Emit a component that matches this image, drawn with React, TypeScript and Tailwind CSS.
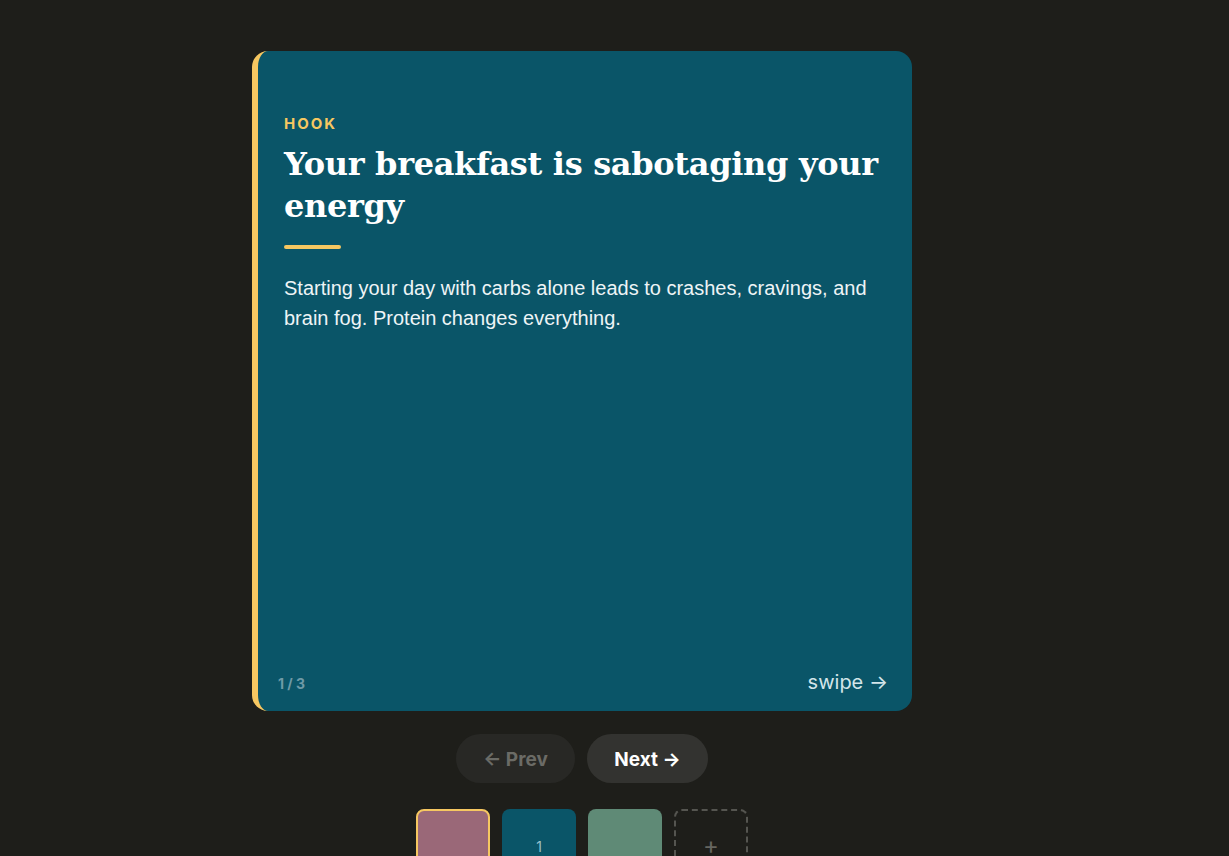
import React from "react";

export default function App() {
  return (
    <div className="w-full bg-[#1e1e1a] flex justify-center pr-[65px] pt-[51px] overflow-hidden" style={{ height: 856 }}>
      <div className="flex flex-col items-center">
        <div className="relative shrink-0 w-[660px] h-[660px] rounded-[16px] bg-[#0a5568] border-l-[6px] border-[#f6c761] pl-[26px] pr-[24px] pt-[64px]">
          <div className="font-['Inter',sans-serif] font-bold text-[15px] leading-[18px] tracking-[0.13em] text-[#f6c761]">HOOK</div>
          <h1 className="mt-[10px] font-['DejaVu_Serif',serif] font-bold text-[32px] leading-[42px] tracking-[-0.01em] text-white">
            Your breakfast is sabotaging your energy
          </h1>
          <div className="mt-[18px] w-[57px] h-[4px] rounded-full bg-[#f6c761]" />
          <p className="mt-[24px] font-['Liberation_Sans',sans-serif] text-[20px] leading-[30px] text-[#eef4f6]">
            Starting your day with carbs alone leads to crashes, cravings, and brain fog. Protein changes everything.
          </p>
          <div className="absolute left-[20px] bottom-[17px] font-['Inter',sans-serif] font-bold text-[14px] text-[#6f9aa7]">1 / 3</div>
          <div className="absolute right-[24px] bottom-[14px] font-['Inter',sans-serif] text-[20px] text-[#d3e5ea]">swipe →</div>
        </div>
        <div className="mt-[23px] flex gap-[12px] shrink-0">
          <button className="w-[119px] h-[49px] rounded-full bg-[#282825] pt-[3px] font-['Inter',sans-serif] font-bold text-[19px] text-[#6b6b66]">← Prev</button>
          <button className="w-[121px] h-[49px] rounded-full bg-[#333330] pt-[3px] font-['Inter',sans-serif] font-bold text-[19px] text-white">Next →</button>
        </div>
        <div className="mt-[26px] flex gap-[12px] shrink-0">
          <div className="w-[74px] h-[74px] rounded-[8px] bg-[#9a6878] border-2 border-[#f6c761]" />
          <div className="w-[74px] h-[74px] rounded-[8px] bg-[#0a5568] flex items-center justify-center font-['Inter',sans-serif] text-[14px] text-[#9cc1cc]">1</div>
          <div className="w-[74px] h-[74px] rounded-[8px] bg-[#5f8a76]" />
          <div className="w-[74px] h-[74px] rounded-[8px] border-2 border-dashed border-[#555550] flex items-center justify-center font-['Inter',sans-serif] text-[24px] text-[#666660]">+</div>
        </div>
      </div>
    </div>
  );
}
